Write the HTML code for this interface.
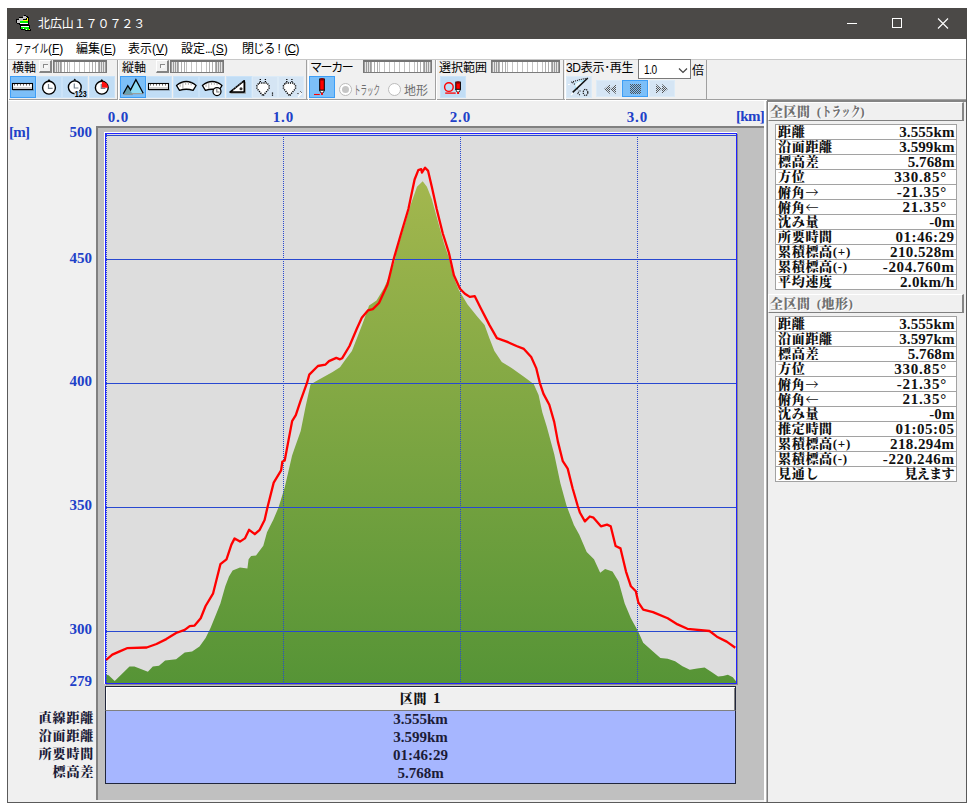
<!DOCTYPE html>
<html lang="ja">
<head>
<meta charset="utf-8">
<title>北広山１７０７２３</title>
<style>
html,body{margin:0;padding:0;background:#fff;}
body{width:977px;height:812px;position:relative;overflow:hidden;font-family:"Liberation Sans","Noto Sans CJK JP",sans-serif;}
.abs{position:absolute;}
#win{position:absolute;left:7px;top:8px;width:960px;height:795px;background:#f0f0f0;box-sizing:border-box;border:1px solid #5a5a5a;border-top:none;}
#title{position:absolute;left:7px;top:8px;width:960px;height:31px;background:#4b4947;color:#fff;}
#title .txt{position:absolute;left:31px;top:8px;font-size:12px;line-height:17px;letter-spacing:-0.1px;white-space:nowrap;}
#menu{position:absolute;left:8px;top:39px;width:958px;height:20px;background:#fff;font-size:12px;line-height:21px;color:#000;white-space:nowrap;}
#menu > span{position:absolute;top:0;}
#menu u{text-decoration:underline;}
.grp{position:absolute;top:60px;height:40px;box-sizing:border-box;border-left:1px solid #fff;border-right:1px solid #a0a0a0;}
.lbl{position:absolute;top:61px;font-size:12px;line-height:14px;color:#000;white-space:nowrap;}
.chk{position:absolute;top:60px;width:13px;height:13px;box-sizing:border-box;background:#f0f0f0;border:1px solid #fff;border-right:2px solid #848484;border-bottom:2px solid #848484;}
.chk i{position:absolute;left:3px;top:3px;width:4px;height:3px;border-left:1px solid #8a8a8a;border-top:1px solid #8a8a8a;background:#f8f8f8;}
.sld{position:absolute;top:60px;height:13px;box-sizing:border-box;border:1px solid #787878;border-top:2px solid #747474;border-bottom:1px solid #7c7c7c;background:repeating-linear-gradient(90deg,#c4c4c4 0,#c4c4c4 1px,#fff 1px,#fff 5px);overflow:hidden;}
.sld i{position:absolute;top:0;bottom:0;}
.sld i.l,.sld i.r{width:7px;background:repeating-linear-gradient(90deg,#9c9c9c 0,#9c9c9c 1px,#e4e4e4 1px,#e4e4e4 2px);}
.sld i.l2,.sld i.r2{width:7px;background:repeating-linear-gradient(90deg,#b0b0b0 0,#b0b0b0 1px,#fff 1px,#fff 3px);}
.sld i.l{left:0;} .sld i.r{right:0;} .sld i.l2{left:7px;} .sld i.r2{right:7px;}
.btn{position:absolute;top:76px;width:26px;height:22px;box-sizing:border-box;background:#c1ddf5;border:1px solid #cbe3f8;}
.btn.dis{background:#d5e5f4;border-color:#dcebf7;}
.btn.on{background:#7cbff8;border:1px solid #3d9ef6;}
.btn.sm{top:80px;height:17px;}
.cmb{position:absolute;left:638px;top:59px;width:53px;height:20px;box-sizing:border-box;background:#fff;border:1px solid #7a7a7a;}
.cmb span{position:absolute;left:5px;top:3px;font-size:12px;line-height:14px;color:#000;letter-spacing:-0.5px;transform:scaleX(0.84);transform-origin:0 50%;}
.cmb svg{position:absolute;left:39px;top:8px;}
.rad{position:absolute;top:83px;width:13px;height:13px;box-sizing:border-box;border:1px solid #bcbcbc;border-radius:50%;background:#fff;}
.rad i{position:absolute;left:2px;top:2px;width:7px;height:7px;border-radius:50%;background:#c6c6c6;}
.rlbl{position:absolute;top:84px;font-size:12px;line-height:15px;color:#6d6d6d;white-space:nowrap;}
.nk2{display:inline-block;transform:scaleX(0.69);transform-origin:0 50%;margin-right:-15px;}
.nk{display:inline-block;transform:scaleX(0.54);transform-origin:0 50%;}
#chartbg{position:absolute;left:96px;top:126px;width:668px;height:674px;background:#c0c0c0;box-sizing:border-box;border-left:2px solid #808080;border-top:2px solid #808080;}
#plot{position:absolute;left:105px;top:133px;}
.ax{position:absolute;font-family:"Liberation Serif","Noto Serif CJK JP","Noto Serif CJK SC",serif;font-weight:bold;color:#2040c8;font-size:15px;line-height:16px;white-space:nowrap;}
.yl{width:60px;text-align:right;left:32px;}
.xl{width:40px;text-align:center;letter-spacing:0.8px;text-indent:0.8px;}
.bl{position:absolute;font-family:"Liberation Serif","Noto Serif CJK JP","Noto Serif CJK SC",serif;font-weight:bold;color:#1c1c38;font-size:13px;letter-spacing:0.8px;line-height:18px;white-space:nowrap;width:87px;text-align:right;left:7px;font-weight:900;}
#seg{position:absolute;left:105px;top:686px;width:631px;height:25px;box-sizing:border-box;background:#f0f0f0;border:1px solid #20263c;border-bottom:1px solid #808080;box-shadow:inset 1px 1px 0 #fff,inset -1px 0 0 #808080;font-family:"Liberation Serif","Noto Serif CJK JP","Noto Serif CJK SC",serif;font-weight:900;font-size:13px;letter-spacing:0.7px;word-spacing:2px;line-height:22px;text-align:center;color:#111;}
#blue{position:absolute;left:105px;top:711px;width:631px;height:73px;box-sizing:border-box;background:#a6b6ff;border:1px solid #20263c;border-top:none;font-family:"Liberation Serif","Noto Serif CJK JP","Noto Serif CJK SC",serif;font-weight:bold;font-size:15px;letter-spacing:0;color:#1c1c38;text-align:center;}
#blue div{height:18px;line-height:18px;position:relative;top:-1px;}
.hdr{position:absolute;left:768px;width:196px;height:19px;box-sizing:border-box;border-top:1px solid #fff;border-left:1px solid #fff;border-right:2px solid #868686;border-bottom:1px solid #808080;background:#f0f0f0;font-family:"Liberation Serif","Noto Serif CJK JP","Noto Serif CJK SC",serif;font-weight:900;font-size:13px;letter-spacing:0.5px;line-height:17px;word-spacing:2.5px;color:#707070;text-shadow:1px 1px 0 #fff;padding-left:1px;white-space:nowrap;}
.nk3{display:inline-block;transform:scaleX(0.72);transform-origin:0 50%;margin-right:-15px;}
.tbl{position:absolute;left:775px;width:182px;background:#fff;border-top:1px solid #a2a2a2;border-left:1px solid #a2a2a2;box-sizing:border-box;font-family:"Liberation Serif","Noto Serif CJK JP","Noto Serif CJK SC",serif;font-weight:bold;font-size:15px;color:#111;}
.tr{position:relative;height:15px;box-sizing:border-box;border-bottom:1px solid #a2a2a2;border-right:1px solid #a2a2a2;line-height:14px;white-space:nowrap;}
.tr .k{position:absolute;left:2px;top:-1px;font-size:13px;letter-spacing:0.7px;line-height:15px;font-weight:900;}
.cj{font-family:"Noto Serif CJK JP","Noto Serif CJK SC",serif;}
.tr .v{position:absolute;right:1.5px;top:0;letter-spacing:0.1px;}
.tr .v.deg{right:9px;}
.tr .v.vj{font-size:13px;font-weight:900;letter-spacing:-0.6px;line-height:15px;top:-1px;right:2px;}
</style>
</head>
<body>
<div id="win"></div>
<div id="title">
<svg class="abs" style="left:9px;top:7px" width="16" height="16" viewBox="0 0 16 16" shape-rendering="crispEdges"><rect x="8" y="0" width="2" height="1" fill="#000"/><rect x="7" y="1" width="3" height="1" fill="#c4c4c4"/><rect x="10" y="1" width="2" height="1" fill="#000"/><rect x="3" y="2" width="4" height="1" fill="#000"/><rect x="7" y="2" width="4" height="1" fill="#c4c4c4"/><rect x="11" y="2" width="2" height="1" fill="#000"/><rect x="3" y="3" width="7" height="1" fill="#c4c4c4"/><rect x="10" y="3" width="1" height="1" fill="#000"/><rect x="11" y="3" width="1" height="1" fill="#ffff00"/><rect x="12" y="3" width="1" height="1" fill="#000"/><rect x="0" y="4" width="3" height="1" fill="#000"/><rect x="3" y="4" width="4" height="1" fill="#c4c4c4"/><rect x="7" y="4" width="4" height="1" fill="#000"/><rect x="11" y="4" width="1" height="1" fill="#ffff00"/><rect x="12" y="4" width="1" height="1" fill="#000"/><rect x="0" y="5" width="1" height="1" fill="#000"/><rect x="1" y="5" width="6" height="1" fill="#c4c4c4"/><rect x="7" y="5" width="5" height="1" fill="#ffff00"/><rect x="12" y="5" width="1" height="1" fill="#000"/><rect x="0" y="6" width="1" height="1" fill="#000"/><rect x="1" y="6" width="3" height="1" fill="#c4c4c4"/><rect x="4" y="6" width="8" height="1" fill="#00f000"/><rect x="12" y="6" width="1" height="1" fill="#000"/><rect x="0" y="7" width="1" height="1" fill="#000"/><rect x="1" y="7" width="3" height="1" fill="#c4c4c4"/><rect x="4" y="7" width="8" height="1" fill="#00f000"/><rect x="12" y="7" width="1" height="1" fill="#000"/><rect x="1" y="8" width="3" height="1" fill="#000"/><rect x="4" y="8" width="8" height="1" fill="#fff"/><rect x="12" y="8" width="1" height="1" fill="#000"/><rect x="3" y="9" width="10" height="1" fill="#000"/><rect x="4" y="10" width="10" height="1" fill="#000"/><rect x="4" y="11" width="1" height="1" fill="#000"/><rect x="5" y="11" width="8" height="1" fill="#fff"/><rect x="13" y="11" width="1" height="1" fill="#000"/><rect x="4" y="12" width="1" height="1" fill="#000"/><rect x="5" y="12" width="8" height="1" fill="#00f000"/><rect x="13" y="12" width="1" height="1" fill="#000"/><rect x="4" y="13" width="1" height="1" fill="#000"/><rect x="5" y="13" width="2" height="1" fill="#00f000"/><rect x="7" y="13" width="1" height="1" fill="#fff"/><rect x="8" y="13" width="5" height="1" fill="#00f000"/><rect x="13" y="13" width="1" height="1" fill="#000"/><rect x="5" y="14" width="4" height="1" fill="#000"/><rect x="9" y="14" width="1" height="1" fill="#00f000"/><rect x="10" y="14" width="1" height="1" fill="#fff"/><rect x="11" y="14" width="2" height="1" fill="#00f000"/><rect x="13" y="14" width="1" height="1" fill="#ffff00"/><rect x="14" y="14" width="1" height="1" fill="#000"/><rect x="9" y="15" width="6" height="1" fill="#000"/></svg>
<span class="txt">北広山１７０７２３</span>
<svg class="abs" style="left:822px;top:0" width="138" height="31" viewBox="0 0 138 31">
<path d="M18 15.5h10" stroke="#fff" stroke-width="1" fill="none" shape-rendering="crispEdges"/>
<rect x="63.500" y="10.500" width="9" height="9" stroke="#fff" stroke-width="1" fill="none" shape-rendering="crispEdges"/>
<path d="M109 10.500l10 10M119 10.500l-10 10" stroke="#fff" stroke-width="1.100" fill="none"/>
</svg>
</div>
<div id="menu">
<span style="left:7px"><span class="nk2">ファイル</span>(<u>F</u>)</span>
<span style="left:68px">編集(<u>E</u>)</span>
<span style="left:120px">表示(<u>V</u>)</span>
<span style="left:173px">設定<span style="letter-spacing:-1.1px">...</span>(<u>S</u>)</span>
<span style="left:234px"><span style="letter-spacing:-1.3px">閉じる</span> ! <span style="letter-spacing:-0.6px">(<u>C</u>)</span></span>
</div>

<!-- toolbar groups -->
<div class="abs" style="left:8px;top:59px;width:958px;height:1px;background:#c8c8c8"></div>
<div class="abs" style="left:8px;top:99px;width:958px;height:1px;background:#a0a0a0"></div>
<div class="abs" style="left:8px;top:100px;width:958px;height:1px;background:#fff"></div>
<div class="grp" style="left:8px;width:110px"></div>
<div class="grp" style="left:118px;width:189px"></div>
<div class="grp" style="left:308px;width:128px"></div>
<div class="grp" style="left:436px;width:128px"></div>
<div class="grp" style="left:565px;width:142px"></div>
<span class="lbl" style="left:12px">横軸</span>
<span class="lbl" style="left:122px">縦軸</span>
<span class="lbl" style="left:310px;letter-spacing:-1.4px">マーカー</span>
<span class="lbl" style="left:439px">選択範囲</span>
<span class="lbl" style="left:566px;letter-spacing:-0.3px">3D表示･再生</span>
<span class="lbl" style="left:692px;top:64px">倍</span>
<span class="chk" style="left:39px"><i></i></span>
<span class="chk" style="left:156px"><i></i></span>
<span class="sld" style="left:53px;width:54px"><i class="l"></i><i class="l2"></i><i class="r2"></i><i class="r"></i></span>
<span class="sld" style="left:170px;width:54px"><i class="l"></i><i class="l2"></i><i class="r2"></i><i class="r"></i></span>
<span class="sld" style="left:363px;width:69px"><i class="l"></i><i class="l2"></i><i class="r2"></i><i class="r"></i></span>
<span class="sld" style="left:491px;width:69px"><i class="l"></i><i class="l2"></i><i class="r2"></i><i class="r"></i></span>
<div class="cmb"><span>1.0</span><svg width="10" height="6" viewBox="0 0 10 6"><path d="M1 0.500L5 4.500L9 0.500" fill="none" stroke="#444" stroke-width="1.200"/></svg></div>
<span class="rad" style="left:339px"><i></i></span><span class="rlbl" style="left:354px"><span class="nk">トラック</span></span>
<span class="rad" style="left:388px"></span><span class="rlbl" style="left:404px">地形</span>
<span class="btn on" style="left:10px"></span>
<span class="btn" style="left:36px"></span>
<span class="btn" style="left:62px"></span>
<span class="btn" style="left:89px"></span>
<span class="btn on" style="left:120px"></span>
<span class="btn" style="left:146px"></span>
<span class="btn" style="left:173px"></span>
<span class="btn" style="left:199px"></span>
<span class="btn" style="left:226px"></span>
<span class="btn dis" style="left:252px"></span>
<span class="btn dis" style="left:278px"></span>
<span class="btn on" style="left:309px"></span>
<span class="btn" style="left:440px"></span>
<span class="btn dis" style="left:566px"></span>
<span class="btn dis sm" style="left:596px"></span>
<span class="btn on sm" style="left:622px"></span>
<span class="btn dis sm" style="left:649px"></span>
<svg class="abs" style="left:0;top:56px" width="720" height="46" viewBox="0 56 720 46"><rect x="13" y="89.5" width="21" height="1" fill="#333" opacity="0.45"/><rect x="12.5" y="83.5" width="20" height="6" fill="#fff" stroke="#000" stroke-width="1.100"/><rect x="13" y="87" width="19" height="2" fill="#cfcfcf"/><path d="M14.5 84v1.600M17.5 84v1.600M20.5 84v1.600M23.5 84v1.600M26.5 84v1.600M29.5 84v1.600" stroke="#666" stroke-width="1"/><circle cx="49" cy="87.7" r="6.4" fill="#fff" stroke="#000" stroke-width="1.400"/><path d="M47.4 81.0L49 78.89999999999999L50.6 81.0Z" fill="#000"/><path d="M48.5 84.0V88.4H52.6" fill="none" stroke="#76828e" stroke-width="1.200"/><circle cx="74.8" cy="87.3" r="6.4" fill="#fff" stroke="#000" stroke-width="1.400"/><rect x="74.500" y="91" width="13" height="7" fill="#c1ddf5"/><path d="M73.2 80.6L74.8 78.49999999999999L76.39999999999999 80.6Z" fill="#000"/><path d="M74.3 83.6V88.0H78.39999999999999" fill="none" stroke="#76828e" stroke-width="1.200"/><text x="74.800" y="97.400" font-family="Liberation Sans, sans-serif" font-weight="bold" font-size="8.500" fill="#000" textLength="12" lengthAdjust="spacingAndGlyphs">123</text><circle cx="101.8" cy="87.7" r="6.4" fill="#fff" stroke="#000" stroke-width="1.400"/><path d="M101.800 87.700V81.400A6.300 6.300 0 0 1 108.100 87.700Z" fill="#ff1010"/><path d="M100.2 81.0L101.8 78.89999999999999L103.39999999999999 81.0Z" fill="#000"/><path d="M101.3 84.0V88.4H105.39999999999999" fill="none" stroke="#76828e" stroke-width="1.200"/><path d="M135.900 79.800L143.200 93.500H128.500Z" fill="#8edcf6"/><path d="M127.800 85.700L132.700 94.400H123.200Z" fill="#68a0b0"/><path d="M132 93.700H143.300" stroke="#a09080" stroke-width="0.900"/><path d="M123.200 94.600H132.700" stroke="#909090" stroke-width="0.900"/><path d="M123.300 93.800L127.800 85.600L130.600 89.900L135.900 79.700L143.200 93.300" fill="none" stroke="#000" stroke-width="1.250" stroke-linejoin="miter"/><rect x="149" y="89.5" width="21" height="1" fill="#333" opacity="0.45"/><rect x="148.5" y="83.5" width="20" height="6" fill="#fff" stroke="#000" stroke-width="1.100"/><rect x="149" y="87" width="19" height="2" fill="#cfcfcf"/><path d="M150.5 84v1.600M153.5 84v1.600M156.5 84v1.600M159.5 84v1.600M162.5 84v1.600M165.5 84v1.600" stroke="#666" stroke-width="1"/><path d="M176.5 85.5Q186.3 77.6 196.10000000000002 85.5L193.10000000000002 90.3Q186.3 88.3 179.5 90.3Z" fill="#fff" stroke="#000" stroke-width="1.350" stroke-linejoin="round"/><path d="M182.9 82.6v6M185.70000000000002 82.3v2.500M188.4 82.3v2.500M191.20000000000002 82.8v2.500M180.10000000000002 84.3v2.500" stroke="#a2a2a2" stroke-width="0.900"/><path d="M202.39999999999998 85.5Q212.2 77.6 222.0 85.5L219.0 90.3Q212.2 88.3 205.39999999999998 90.3Z" fill="#fff" stroke="#000" stroke-width="1.350" stroke-linejoin="round"/><path d="M208.79999999999998 82.6v6M211.6 82.3v2.500M214.29999999999998 82.3v2.500M217.1 82.8v2.500M206.0 84.3v2.500" stroke="#a2a2a2" stroke-width="0.900"/><circle cx="217" cy="91.600" r="4" fill="#fff" stroke="#000" stroke-width="1.250"/><path d="M216.800 88.800V92H219.500" fill="none" stroke="#777" stroke-width="1.100"/><path d="M230 92.100H244.300V80.700Z" fill="#fff" stroke="#000" stroke-width="1.600" stroke-linejoin="round"/><path d="M230.500 93.300H245.500V82" fill="none" stroke="#8a8a8a" stroke-width="0.800"/><circle cx="241" cy="88.800" r="1.500" fill="#333"/><path d="M233 89.500L242 82.300" stroke="#888" stroke-width="1" stroke-dasharray="1 1.500"/><path d="M260.3 79v4M265.4 79v4" stroke="#000" stroke-width="1.300" stroke-dasharray="1 1"/><path d="M259.0 83H267.0L269.0 85.5V88.5L263.0 95.8L257.0 88.5V85.5Z" fill="#fff" stroke="#000" stroke-width="1.450" stroke-dasharray="1.200 1"/><path d="M272.500 92.500v4" stroke="#000" stroke-width="1.200" stroke-dasharray="1.300 0.700"/><path d="M286.8 79v4M291.9 79v4" stroke="#000" stroke-width="1.300" stroke-dasharray="1 1"/><path d="M285.5 83H293.5L295.5 85.5V88.5L289.5 95.8L283.5 88.5V85.5Z" fill="#fff" stroke="#000" stroke-width="1.450" stroke-dasharray="1.200 1"/><path d="M298 93.500h1.500M300.500 92l1.500 1.500M298 97l3.500-3.500" stroke="#fff" stroke-width="1.200"/><path d="M297.500 93.500h1M300.500 91.500l1 1" stroke="#000" stroke-width="1"/><rect x="319.7" y="79" width="4.600" height="11.3" fill="#ff0000" stroke="#000" stroke-width="1"/><path d="M320.0 80.2V78.8Q322.0 77.4 324.0 78.8V80.2Q322.0 81 320.0 80.2Z" fill="#8a0000"/><path d="M319.5 90.3h5l-1.500 2.700h-2z" fill="#fff" stroke="#000" stroke-width="0.800"/><rect x="321.0" y="92.8" width="2" height="2.100" fill="#ff0000"/><path d="M314 94.500h5.800" stroke="#ff0000" stroke-width="1.100"/><circle cx="448.900" cy="87.100" r="4.300" fill="none" stroke="#ff0000" stroke-width="1.400"/><path d="M445.200 93.100H455.700" fill="none" stroke="#ff0000" stroke-width="1.300"/><rect x="455.8" y="82.1" width="4.600" height="7.300000000000001" fill="#ff0000" stroke="#000" stroke-width="1"/><path d="M456.1 83.3V81.89999999999999Q458.1 80.5 460.1 81.89999999999999V83.3Q458.1 84.1 456.1 83.3Z" fill="#8a0000"/><path d="M455.6 89.39999999999999h5l-1.500 2.700h-2z" fill="#fff" stroke="#000" stroke-width="0.800"/><rect x="457.1" y="91.89999999999999" width="2" height="2.100" fill="#ff0000"/><defs><pattern id="ck" width="2" height="2" patternUnits="userSpaceOnUse"><rect x="0" y="0" width="1" height="1" fill="#555"/><rect x="1" y="1" width="1" height="1" fill="#555"/></pattern></defs><path d="M574.500 89.500L585.500 79.500L580 80.500L575 83Z" fill="#aee4f8"/><path d="M575 84l4-2.500l3 1l-5.500 6z" fill="#fff" opacity="0.8"/><path d="M572.700 92.400L587.800 78" stroke="#111" stroke-width="1.500"/><path d="M571.200 82.300L579 79.800L586.600 78.300M572.500 82.500L575.500 85M577 88.500l1.500 1.500M580.400 90.600l-3 2.400l3 2.500" fill="none" stroke="#111" stroke-width="1.100" stroke-dasharray="1 1"/><ellipse cx="585.500" cy="92.400" rx="2.300" ry="3.100" fill="none" stroke="#111" stroke-width="1.200" stroke-dasharray="1.300 0.900"/><path d="M568 84.500h1.800M571 95l2-2" stroke="#fff" stroke-width="1.100"/><g><path d="M610 84V94L604 89ZM616 84V94L610 89Z" fill="url(#ck)"/><rect x="630" y="84" width="11" height="10" fill="url(#ck)"/><path d="M656 84V94L662 89ZM662 84V94L668 89Z" fill="url(#ck)"/></g></svg>
<!-- chart -->
<div id="chartbg"></div>
<div class="abs" style="left:104px;top:132px;width:633px;height:552px;background:#fff"></div>
<svg id="plot" width="633" height="552" viewBox="0 0 633 552">
<defs><linearGradient id="tg" gradientUnits="userSpaceOnUse" x1="0" y1="48" x2="0" y2="550"><stop offset="0" stop-color="#a3b74e"/><stop offset="1" stop-color="#569436"/></linearGradient></defs>
<rect x="0" y="0" width="632" height="551" fill="#dddddd"/>
<polygon points="1,550 1.1,541.7 3.6,542.2 9.7,547.9 24.5,533.4 29.4,533.4 42.9,538.8 47.8,533.6 54.0,532.7 60.1,527.5 71.1,526.3 79.7,519.6 87.1,518.4 94.5,513.5 100.6,504.9 105.5,495.1 110.5,482.8 115.4,470.5 120.3,453.3 124.0,443.5 127.6,437.4 135.0,434.4 142.4,435.4 143.6,426.3 146.1,423.1 151.0,422.6 158.3,412.8 162.0,399.3 166.9,389.5 168.2,387.0 173.6,374.2 179.7,354.6 187.1,322.6 189.6,315.3 195.7,298.1 200.6,273.5 205.5,251.4 210.5,248.4 227.6,239.1 235.0,234.2 239.6,227.7 246.9,217.9 251.8,205.6 258.0,189.6 264.1,172.4 271.5,167.5 278.9,155.2 285.0,141.7 289.9,127.0 291.1,120.2 298.5,95.6 305.9,71.0 312.0,53.8 317.7,48.2 321.9,53.8 326.8,66.1 332.9,88.2 339.0,110.3 344.0,125.1 348.9,144.7 353.8,157.0 362.4,171.2 372.2,183.5 379.6,192.1 384.5,205.6 389.4,217.9 396.8,228.9 406.6,235.1 418.9,243.7 428.7,251.0 433.6,262.1 437.3,279.3 441.8,293.8 449.2,320.9 455.4,350.3 461.5,372.5 468.9,392.1 474.3,401.7 481.7,418.9 489.0,426.3 495.2,439.8 500.1,436.1 507.5,438.6 513.6,448.4 519.7,470.5 525.9,485.3 533.3,498.8 538.2,509.8 548.0,518.4 555.4,525.1 562.7,525.8 570.1,528.2 577.5,533.2 584.8,536.8 592.2,535.6 599.6,534.4 606.9,539.3 613.1,543.5 618.0,543.0 622.9,541.8 627.8,544.2 631.5,549.1 631.5,550" fill="url(#tg)"/>
<g stroke="#2848d0" stroke-width="1" shape-rendering="crispEdges" fill="none">
<path d="M0 126.5H632M0 250.5H632M0 374.5H632M0 498.5H632"/>
<path d="M178.5 0V551M355.5 0V551M532.5 0V551" stroke-dasharray="1 1"/>
</g>
<g shape-rendering="crispEdges" fill="none">
<path d="M0 2.500H632" stroke="#2848d0"/>
<path d="M1.500 1V551" stroke="#2848d0" stroke-dasharray="1 1"/>
<rect x="0.500" y="0.500" width="631" height="550" stroke="#2222ff"/>
<path d="M632.5 1V551.5H1" stroke="#8c8c8c"/>
</g>
<polyline points="1.1,527.0 7.3,521.6 14.7,518.4 22.0,515.2 41.7,514.5 51.5,511.0 61.3,506.1 71.1,500.0 79.7,496.8 84.7,493.1 89.6,492.6 95.7,485.3 100.6,473.0 108.0,460.7 111.7,446.0 115.4,431.2 121.5,426.3 126.4,411.6 129.6,405.4 135.0,408.6 139.9,405.4 144.1,396.8 149.8,401.2 154.7,396.8 159.6,387.0 162.5,374.2 168.7,349.6 176.1,337.4 177.3,328.8 179.7,327.5 183.4,307.9 187.1,288.2 190.8,282.1 195.7,267.4 201.9,250.2 204.3,241.6 212.9,233.0 220.3,231.7 224.0,228.1 231.3,224.9 235.0,226.3 237.1,225.3 244.5,213.0 251.8,195.8 256.8,184.7 262.9,177.4 267.8,176.1 274.0,170.0 282.5,151.6 288.7,126.0 296.1,100.5 303.4,76.0 309.6,46.5 313.3,37.1 316.2,36.2 316.9,39.6 320.1,34.7 323.1,37.9 326.8,53.8 331.7,76.0 337.8,100.5 344.0,120.2 348.9,142.3 355.0,155.8 359.9,160.7 364.8,163.9 369.8,163.2 375.9,175.4 384.5,192.1 391.9,205.1 401.7,208.6 411.5,213.0 418.9,215.9 426.2,224.0 431.2,235.1 434.8,249.8 438.5,260.9 444.3,271.7 449.2,288.9 452.9,308.6 457.8,328.2 462.7,335.6 467.6,355.3 472.6,372.5 475.0,379.8 479.9,388.4 484.8,383.5 488.5,384.7 495.9,393.3 502.0,391.6 505.7,393.3 510.6,413.0 515.5,415.4 521.0,438.6 525.9,453.3 530.8,458.2 533.3,469.3 538.2,476.7 548.0,479.1 562.7,485.3 572.6,491.4 582.4,495.8 604.5,498.0 611.9,503.7 621.7,508.6 630.3,514.7" fill="none" stroke="#ff0000" stroke-width="2.300" stroke-linejoin="round"/>
</svg>

<span class="ax yl" style="top:124px">500</span>
<span class="ax yl" style="top:250px">450</span>
<span class="ax yl" style="top:373px">400</span>
<span class="ax yl" style="top:497px">350</span>
<span class="ax yl" style="top:621px">300</span>
<span class="ax yl" style="top:673px">279</span>
<span class="ax" style="left:9px;top:124px;letter-spacing:-0.7px">[m]</span>
<span class="ax xl" style="left:98px;top:109px">0.0</span>
<span class="ax xl" style="left:263px;top:109px">1.0</span>
<span class="ax xl" style="left:440px;top:109px">2.0</span>
<span class="ax xl" style="left:617px;top:109px">3.0</span>
<span class="ax" style="left:736px;top:107.5px;letter-spacing:-0.7px">[km]</span>

<div id="seg">区間 <span style="font-size:15px;font-weight:bold">1</span></div>
<div id="blue"><div>3.555km</div><div>3.599km</div><div>01:46:29</div><div>5.768m</div></div>
<span class="bl" style="top:709px">直線距離</span>
<span class="bl" style="top:727px">沿面距離</span>
<span class="bl" style="top:745px">所要時間</span>
<span class="bl" style="top:763px">標高差</span>

<!-- right panel -->
<div class="abs" style="left:764px;top:101px;width:2px;height:701px;background:#fff"></div>
<div class="abs" style="left:766px;top:101px;width:1px;height:701px;background:#b4b4b4"></div>
<div class="abs" style="left:767px;top:101px;width:1px;height:701px;background:#7e7e7e"></div>
<div class="abs" style="left:767px;top:100px;width:199px;height:2px;background:#848484"></div>
<div class="hdr" style="top:102px">全区間 (<span class="nk3">トラック</span>)</div>
<div class="tbl" style="top:124px">
<div class="tr"><span class="k">距離</span><span class="v" style="letter-spacing:0.1px">3.555km</span></div>
<div class="tr"><span class="k">沿面距離</span><span class="v" style="letter-spacing:0.1px">3.599km</span></div>
<div class="tr"><span class="k">標高差</span><span class="v">5.768m</span></div>
<div class="tr"><span class="k">方位</span><span class="v deg" style="letter-spacing:0.8px">330.85°</span></div>
<div class="tr"><span class="k">俯角<span class="cj">→</span></span><span class="v deg" style="letter-spacing:0.8px">-21.35°</span></div>
<div class="tr"><span class="k">俯角<span class="cj">←</span></span><span class="v deg" style="letter-spacing:0.8px">21.35°</span></div>
<div class="tr"><span class="k">沈み量</span><span class="v">-0m</span></div>
<div class="tr"><span class="k">所要時間</span><span class="v" style="letter-spacing:0.5px">01:46:29</span></div>
<div class="tr"><span class="k">累積標高(+)</span><span class="v" style="letter-spacing:0.4px">210.528m</span></div>
<div class="tr"><span class="k">累積標高(-)</span><span class="v" style="letter-spacing:0.6px">-204.760m</span></div>
<div class="tr"><span class="k">平均速度</span><span class="v" style="letter-spacing:0.35px">2.0km/h</span></div>
</div>
<div class="hdr" style="top:294px">全区間 (地形)</div>
<div class="tbl" style="top:316px">
<div class="tr"><span class="k">距離</span><span class="v" style="letter-spacing:0.1px">3.555km</span></div>
<div class="tr"><span class="k">沿面距離</span><span class="v" style="letter-spacing:0.1px">3.597km</span></div>
<div class="tr"><span class="k">標高差</span><span class="v">5.768m</span></div>
<div class="tr"><span class="k">方位</span><span class="v deg" style="letter-spacing:0.8px">330.85°</span></div>
<div class="tr"><span class="k">俯角<span class="cj">→</span></span><span class="v deg" style="letter-spacing:0.8px">-21.35°</span></div>
<div class="tr"><span class="k">俯角<span class="cj">←</span></span><span class="v deg" style="letter-spacing:0.8px">21.35°</span></div>
<div class="tr"><span class="k">沈み量</span><span class="v">-0m</span></div>
<div class="tr"><span class="k">推定時間</span><span class="v" style="letter-spacing:0.5px">01:05:05</span></div>
<div class="tr"><span class="k">累積標高(+)</span><span class="v" style="letter-spacing:0.4px">218.294m</span></div>
<div class="tr"><span class="k">累積標高(-)</span><span class="v" style="letter-spacing:0.6px">-220.246m</span></div>
<div class="tr"><span class="k">見通し</span><span class="v vj">見えます</span></div>
</div>
</body>
</html>
